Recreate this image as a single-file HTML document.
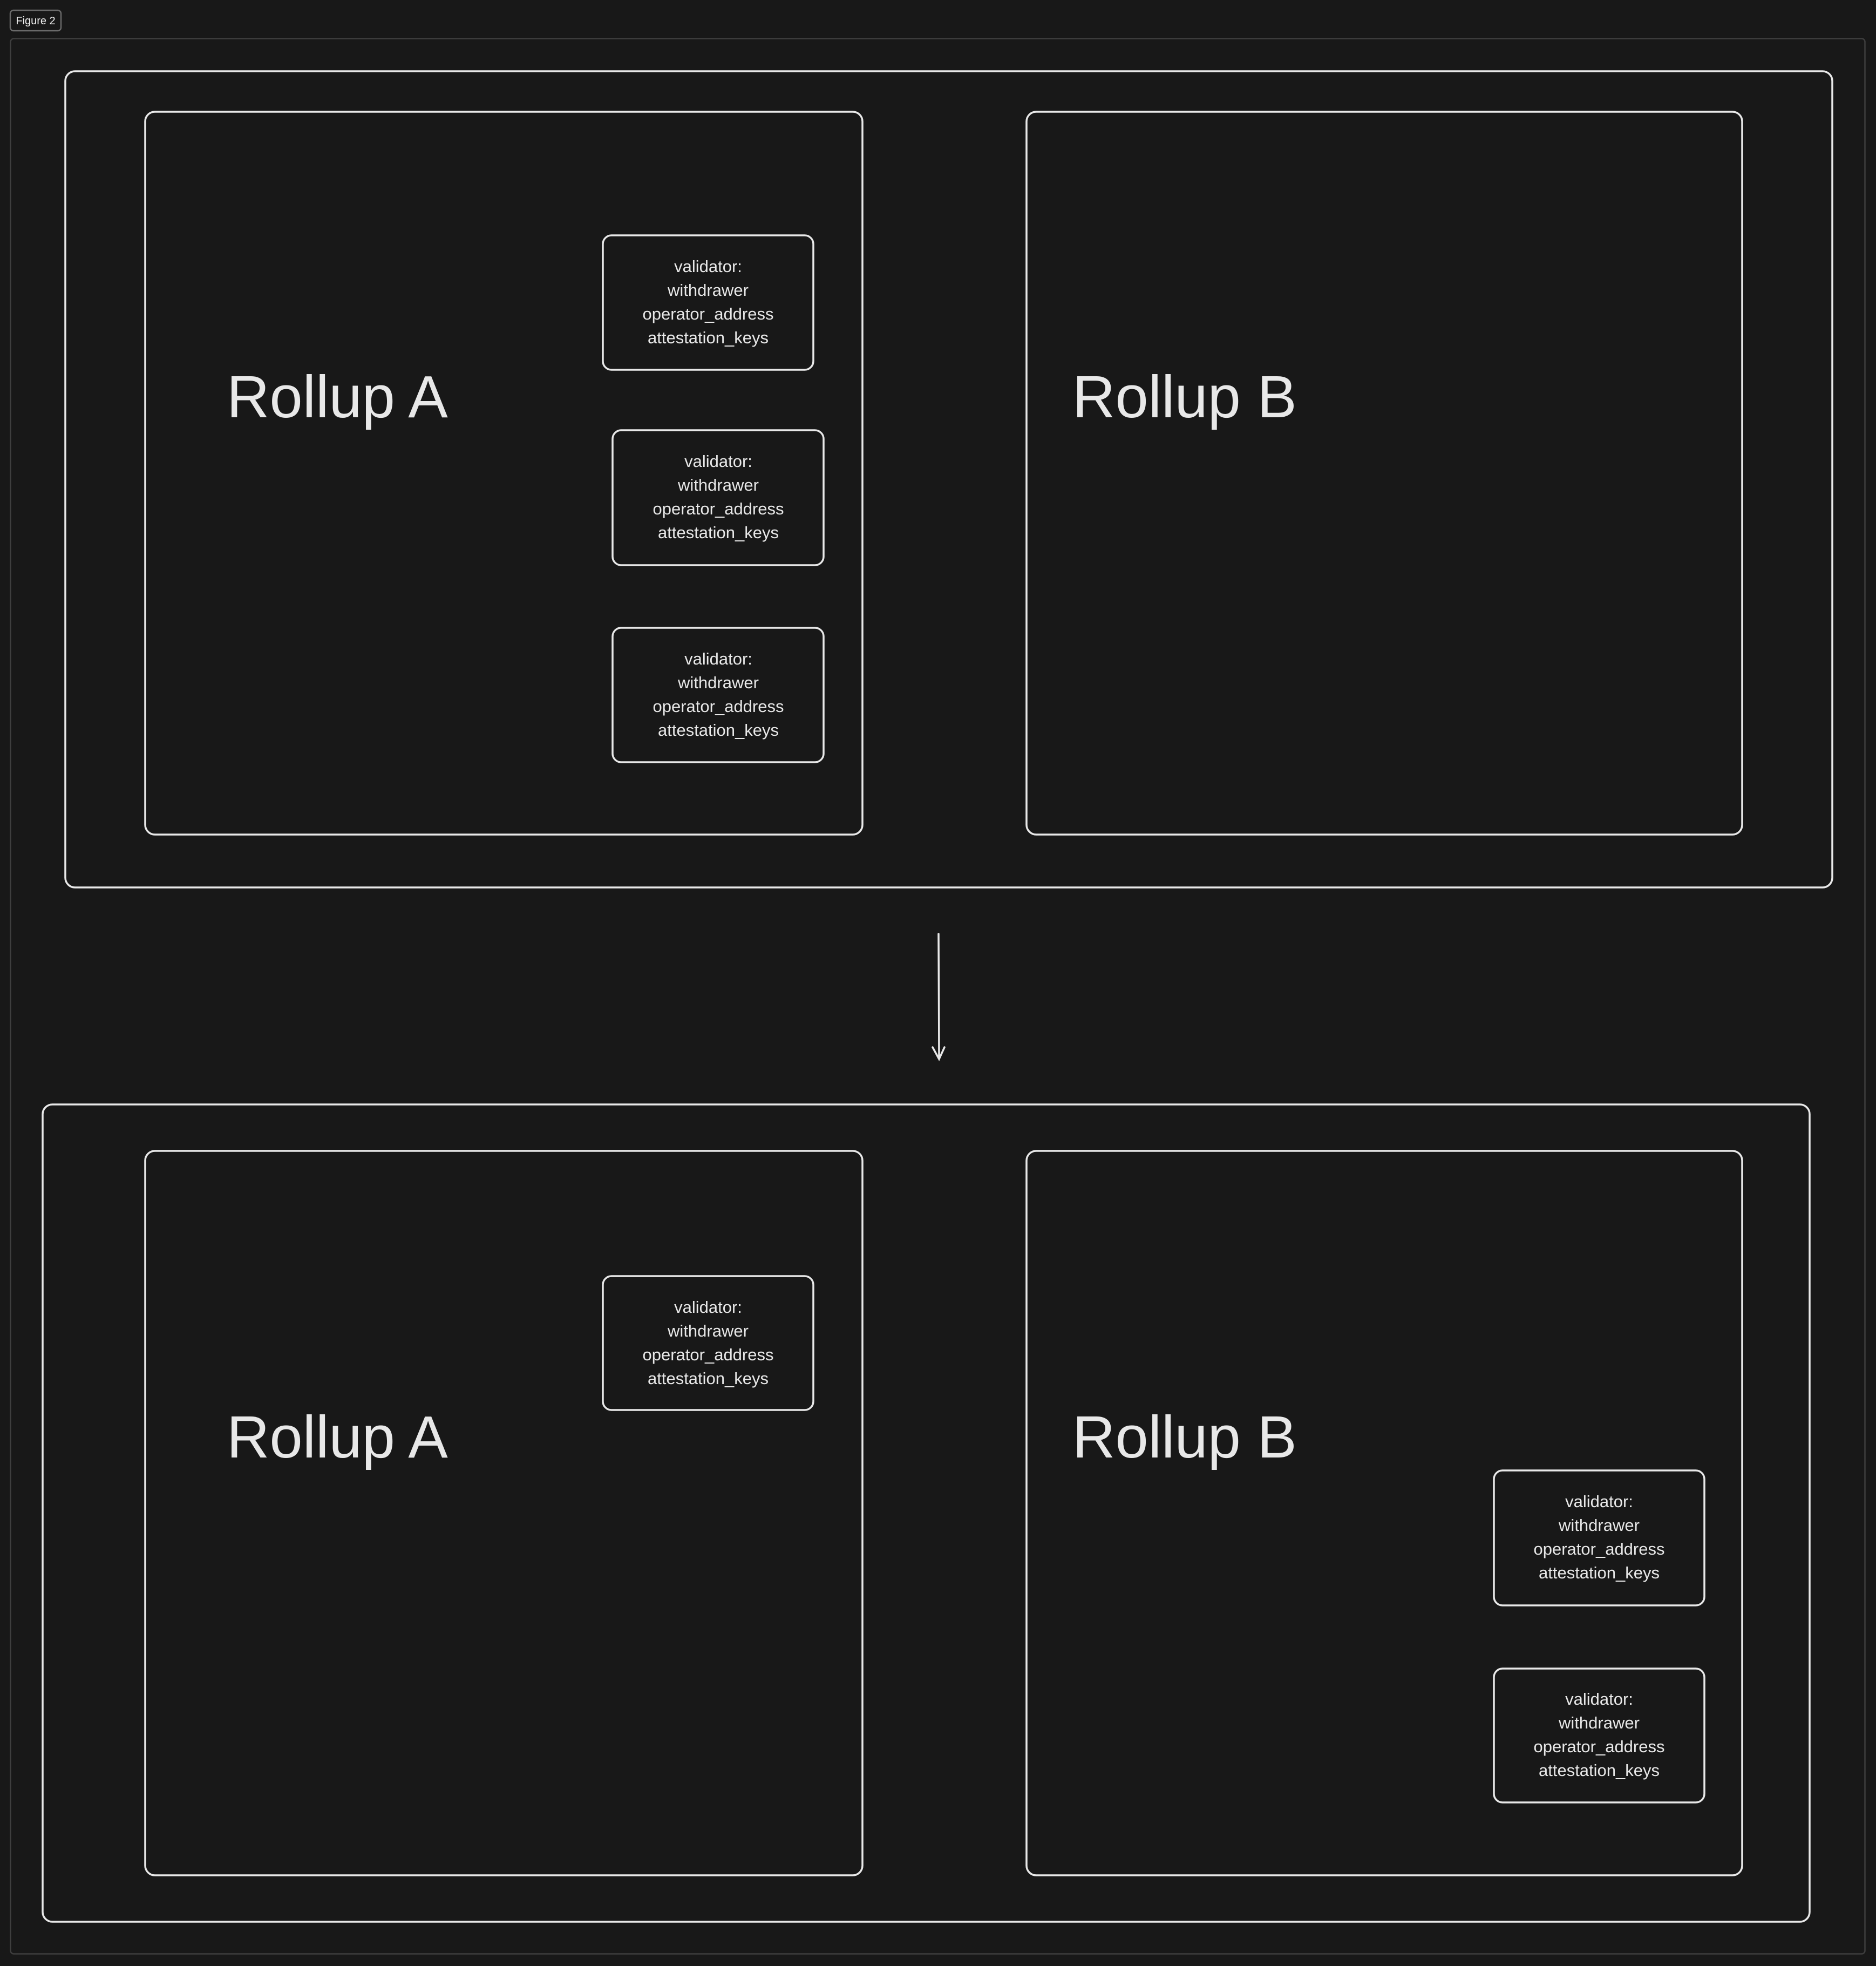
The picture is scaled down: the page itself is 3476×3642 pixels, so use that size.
<!DOCTYPE html>
<html><head><meta charset="utf-8"><style>
html,body{margin:0;padding:0;background:#181818;}
svg{display:block}
.v{font-family:"Liberation Sans",sans-serif;font-size:31px;fill:#e8e8e8;text-anchor:middle}
.r{font-family:"Liberation Sans",sans-serif;font-size:110px;fill:#e8e8e8}
</style></head><body>
<svg width="3476" height="3642" viewBox="0 0 3476 3642" xmlns="http://www.w3.org/2000/svg">
<rect width="3476" height="3642" fill="#181818"/>
<rect x="19" y="19" width="94" height="38" rx="6" fill="none" stroke="#6a6a6a" stroke-width="2.5"/>
<text x="66" y="45" font-family="Liberation Sans, sans-serif" font-size="20" fill="#eeeeee" text-anchor="middle">Figure 2</text>
<rect x="19.5" y="71.5" width="3436" height="3548" rx="6" fill="none" stroke="#3e3e3e" stroke-width="2.5"/>
<g fill="none" stroke="#e8e8e8" stroke-width="3.5">
<rect x="121" y="132" width="3274" height="1512" rx="18"/>
<rect x="269" y="207" width="1329" height="1339" rx="18"/>
<rect x="1902" y="207" width="1326" height="1339" rx="18"/>
<rect x="1117" y="436" width="390" height="249" rx="16"/>
<rect x="1135" y="797" width="391" height="250" rx="16"/>
<rect x="1135" y="1163" width="391" height="249" rx="16"/>
<rect x="79" y="2046" width="3274" height="1514" rx="18"/>
<rect x="269" y="2132" width="1329" height="1342" rx="18"/>
<rect x="1902" y="2132" width="1326" height="1342" rx="18"/>
<rect x="1117" y="2364" width="390" height="248" rx="16"/>
<rect x="2768" y="2724" width="390" height="250" rx="16"/>
<rect x="2768" y="3091" width="390" height="248" rx="16"/>
<path d="M1739 1730 L1740 1960 M1728 1940 L1740 1962 L1750 1940" stroke-linecap="round"/>
</g>
<text class="r" x="420" y="773">Rollup A</text>
<text class="r" x="1987" y="773">Rollup B</text>
<text class="r" x="420" y="2700">Rollup A</text>
<text class="r" x="1987" y="2700">Rollup B</text>
<g class="v">
<text x="1312" y="504">validator:</text><text x="1312" y="548">withdrawer</text><text x="1312" y="592">operator_address</text><text x="1312" y="636">attestation_keys</text>
<text x="1331" y="865">validator:</text><text x="1331" y="909">withdrawer</text><text x="1331" y="953">operator_address</text><text x="1331" y="997">attestation_keys</text>
<text x="1331" y="1231">validator:</text><text x="1331" y="1275">withdrawer</text><text x="1331" y="1319">operator_address</text><text x="1331" y="1363">attestation_keys</text>
<text x="1312" y="2432">validator:</text><text x="1312" y="2476">withdrawer</text><text x="1312" y="2520">operator_address</text><text x="1312" y="2564">attestation_keys</text>
<text x="2963" y="2792">validator:</text><text x="2963" y="2836">withdrawer</text><text x="2963" y="2880">operator_address</text><text x="2963" y="2924">attestation_keys</text>
<text x="2963" y="3158">validator:</text><text x="2963" y="3202">withdrawer</text><text x="2963" y="3246">operator_address</text><text x="2963" y="3290">attestation_keys</text>
</g>
</svg>
</body></html>
